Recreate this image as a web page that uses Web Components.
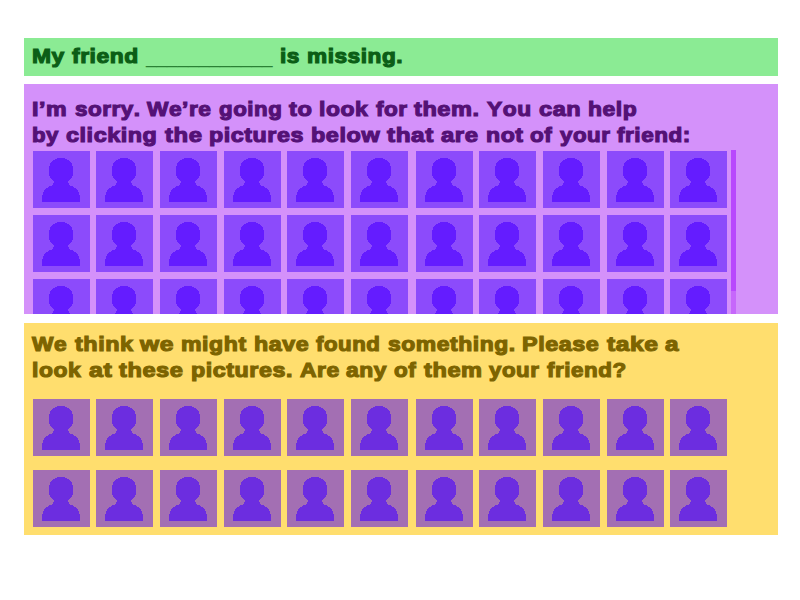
<!DOCTYPE html>
<html lang="en">
<head>
<meta charset="utf-8">
<title>Missing friend</title>
<style>
body{margin:0;background:#fff;width:800px;height:600px;overflow:hidden}
</style>
</head>
<body>
<friend-page></friend-page>
<script>
const ADV = {' ':.333,a:.667,b:.667,c:.667,d:.667,e:.667,f:.389,g:.667,h:.667,i:.333,k:.667,l:.333,m:1,n:.667,o:.667,p:.667,r:.444,s:.611,t:.444,u:.667,v:.611,w:.944,y:.611,W:1,Y:.778,I:.389,P:.722,A:.778,M:.944,'.':.333,'’':.278,':':.333,'?':.611,_:.5};
const SIZE = 21.1;
const pen = document.createElement('canvas').getContext('2d');

// A heading line: each word is widened to its display-face width.
class FriendLine extends HTMLElement {
  connectedCallback() {
    const root = this.attachShadow({mode: 'open'});
    root.innerHTML = `<style>
      :host{display:flex;height:25.5px;font:bold 21px/25px "Liberation Sans",Arial,sans-serif;white-space:pre;font-kerning:none}
      span{display:block;flex:none;transform-origin:0 0}
      .word{-webkit-text-stroke:1.15px currentColor}
      .blank{font-weight:normal;opacity:.75}
    </style>`;
    for (const part of this.getAttribute('text').match(/\S+|\s/g)) {
      const s = document.createElement('span');
      s.textContent = part;
      const target = [...part].reduce((n, c) => n + ADV[c] * SIZE, 0);
      s.style.width = target + 'px';
      const blank = part[0] === '_';
      s.className = blank ? 'blank' : 'word';
      if (part !== ' ') {
        pen.font = (blank ? '' : 'bold ') + '21px "Liberation Sans"';
        pen.fontKerning = 'none';
        // A little of the extra width goes between letters, to clear their outlines.
        const gap = blank ? 0 : .5;
        s.style.letterSpacing = gap + 'px';
        s.style.transform = `scaleX(${target / (pen.measureText(part).width + gap * part.length)})`;
      }
      root.append(s);
    }
  }
}
customElements.define('friend-line', FriendLine);

class FriendPanel extends HTMLElement {
  constructor() {
    super();
    this.attachShadow({mode: 'open'}).innerHTML = `<style>
      :host{display:block;box-sizing:border-box;width:754px;overflow:hidden}
    </style><slot></slot>`;
  }
}
customElements.define('friend-panel', FriendPanel);

class FriendPhoto extends HTMLElement {
  constructor() {
    super();
    this.attachShadow({mode: 'open'}).innerHTML = `<style>
      :host{display:block;width:57px;height:57px;background:var(--tile)}
      svg{display:block;fill:var(--person)}
    </style><svg width="57" height="57" shape-rendering="crispEdges"><path d="M24 7H32V8H34V9H36V10H37V11H38V12H39V15H40V25H39V27H38V28H37V29H36V30H35V32H36V34H37V35H40V36H41V37H43V38H44V39H45V41H46V44H47V51H9V44H10V41H11V39H12V38H13V37H15V36H16V35H19V34H20V32H21V30H20V29H19V28H18V27H17V25H16V15H17V12H18V11H19V10H20V9H22V8H24Z"/></svg>`;
  }
}
customElements.define('friend-photo', FriendPhoto);

class FriendGrid extends HTMLElement {
  connectedCallback() {
    this.attachShadow({mode: 'open'}).innerHTML = `<style>
      :host{display:grid;grid-template-columns:63px 64px 64px 63px 64px 65px 63px 64px 64px 63px 57px;grid-auto-rows:57px;row-gap:var(--row-gap);width:694px}
    </style>` + '<friend-photo></friend-photo>'.repeat(11 * this.getAttribute('rows'));
  }
}
customElements.define('friend-grid', FriendGrid);

class FriendScrollbar extends HTMLElement {
  constructor() {
    super();
    this.attachShadow({mode: 'open'}).innerHTML = `<style>
      :host{display:block;width:5px;background:#c667fb}
      div{height:141px;background:#b848fd}
    </style><div></div>`;
  }
}
customElements.define('friend-scrollbar', FriendScrollbar);

class FriendPage extends HTMLElement {
  constructor() {
    super();
    this.attachShadow({mode: 'open'}).innerHTML = `<style>
      :host{display:flex;flex-direction:column;padding:38px 22px 0 24px}
      friend-line{margin-left:8.4px}
      .report{height:37.5px;background:#8beb94;color:#0b5e16;padding-top:5px}
      .search{height:229.5px;margin-top:8.5px;background:#d491fa;color:#541176;padding-top:12px;--tile:#8c4bfb;--person:#641cff;--row-gap:7px}
      .found{height:212px;margin-top:9.5px;background:#ffde6e;color:#7d6400;padding-top:8px;--tile:#a36fb3;--person:#6c2de0;--row-gap:14px}
      .scroll{display:flex;gap:4px;height:163.5px;margin:3px 0 0 9px;overflow:hidden}
      .scroll friend-grid{margin-top:1px}
      .found friend-grid{margin:17px 0 0 9px}
    </style>
    <friend-panel class="report"><friend-line text="My friend ____________ is missing."></friend-line></friend-panel>
    <friend-panel class="search">
      <friend-line text="I’m sorry. We’re going to look for them. You can help"></friend-line>
      <friend-line text="by clicking the pictures below that are not of your friend:"></friend-line>
      <div class="scroll"><friend-grid rows="3"></friend-grid><friend-scrollbar></friend-scrollbar></div>
    </friend-panel>
    <friend-panel class="found">
      <friend-line text="We think we might have found something. Please take a"></friend-line>
      <friend-line text="look at these pictures. Are any of them your friend?"></friend-line>
      <friend-grid rows="2"></friend-grid>
    </friend-panel>`;
  }
}
customElements.define('friend-page', FriendPage);
</script>
</body>
</html>
